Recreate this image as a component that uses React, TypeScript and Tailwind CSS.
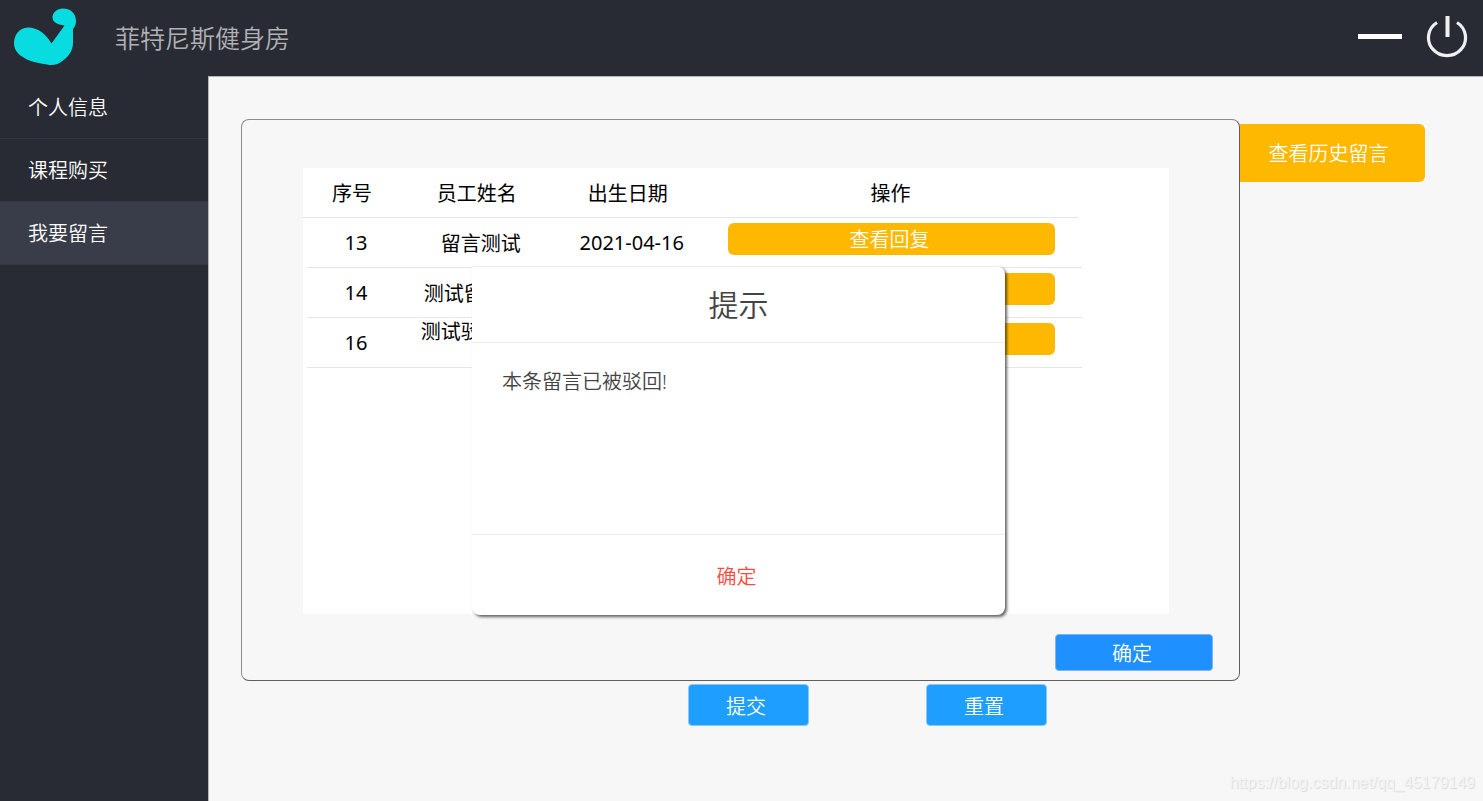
const menu = [
  { label: '个人信息', active: false },
  { label: '课程购买', active: false },
  { label: '我要留言', active: true },
];

const columns = ['序号', '员工姓名', '出生日期', '操作'];

const messages = [
  { id: 13, name: '留言测试', date: '2021-04-16' },
  { id: 14, name: '测试留言002', date: '2021-04-16' },
  { id: 16, name: '测试驳回留言1', date: '2021-04-16' },
];

const rowGrid = 'grid grid-cols-[98fr_152fr_150fr_376fr] border-b border-[#e6e6e6]';

function Logo() {
  return (
    <svg className="h-[60px] w-[66px]" viewBox="0 0 66 60" fill="#08dce0" aria-hidden="true">
      <path d="M39.5 36.5C34 27 26 20.5 16 20.5C7 21 2 28 2 36.5C2 44 8 49 15 52.500C22 55.500 29 56.500 35 57.500C41 59 46 57.500 51 53.500C57 49 61 43.500 61 35.500V22C63 20 64 17 64 14C64 6 58 1.500 51 1.500C45 1.500 40.500 5.500 40.500 10.500C40.500 15 45 17.500 52.500 18.500Z" />
    </svg>
  );
}

function PowerIcon() {
  return (
    <svg className="h-11 w-[42px]" viewBox="0 0 42 44" fill="none" stroke="#f0f0f0" strokeWidth="3.200" aria-hidden="true">
      <path d="M11 7.500A18.500 18 0 1 0 31 7.500" />
      <path d="M21.500 1V22" strokeWidth="4" />
    </svg>
  );
}

function MessageTable() {
  return (
    <table className="block w-[90%] text-xl leading-6 font-normal text-black">
      <thead className="block pr-1">
        <tr className={rowGrid}>
          {columns.map((c) => (
            <th key={c} scope="col" className="flex h-[49px] items-center justify-center pt-0.5 font-normal">
              {c}
            </th>
          ))}
        </tr>
      </thead>
      <tbody className="block pl-1">
        {messages.map((m) => (
          <tr key={m.id} className={rowGrid}>
            <td className="flex h-[49px] items-center justify-center">{m.id}</td>
            <td className="flex h-[49px] items-center justify-center px-3 pt-0.5 text-center">{m.name}</td>
            <td className="flex h-[49px] items-center justify-center">{m.date}</td>
            <td className="h-[49px] pt-[5px] pr-[27px] pl-[21px]">
              <button
                type="button"
                className="h-8 w-full rounded-md bg-[#ffb800] pt-0.5 pr-1 text-xl leading-[30px] font-[350] text-white"
              >
                查看回复
              </button>
            </td>
          </tr>
        ))}
      </tbody>
    </table>
  );
}

function NoticeDialog() {
  return (
    <div className="absolute inset-x-0 top-[146px] flex justify-center pr-1">
      <div
        role="dialog"
        aria-labelledby="notice-title"
        className="w-[533px] rounded-tr-lg rounded-br-lg rounded-bl-lg border-t border-[#f0f0f0] bg-white text-[#444444] shadow-[2px_2px_3px_rgba(0,0,0,0.6)]"
      >
        <h2 id="notice-title" className="border-b border-[#ebebeb] pt-0.5 pb-px text-center text-3xl leading-[72px]">
          提示
        </h2>
        <p className="h-[191px] px-[30px] pt-[25px] text-xl leading-7">本条留言已被驳回!</p>
        <div className="border-t border-[#ebebeb] pt-1">
          <button type="button" className="h-[76px] w-full pr-1 text-xl text-[#ff4b3e]">
            确定
          </button>
        </div>
      </div>
    </div>
  );
}

export default function App() {
  return (
    <div className="flex min-h-screen flex-col bg-[#282b33] font-['Noto_Sans','Noto_Sans_CJK_SC',sans-serif] font-[350]">
      <header className="flex h-[76px] items-center pr-[15px] pb-[3px] pl-3">
        <Logo />
        <h1 className="ml-[37px] pt-0.5 text-[25px] leading-8 font-[350] text-[#b0b1b4]">菲特尼斯健身房</h1>
        <div className="ml-auto flex items-center gap-6">
          <button type="button" aria-label="最小化" className="flex h-11 w-11 items-center">
            <span className="h-[5px] w-full bg-white" />
          </button>
          <button type="button" aria-label="退出">
            <PowerIcon />
          </button>
        </div>
      </header>

      <div className="flex flex-1">
        <nav className="w-52 shrink-0">
          <ul>
            {menu.map((item) => (
              <li key={item.label} className="border-b border-[#343742]">
                <a
                  href="#"
                  aria-current={item.active ? 'page' : undefined}
                  className={
                    item.active
                      ? 'block bg-[#393d49] pt-0.5 pl-7 text-xl leading-[60px] text-white'
                      : 'block pt-0.5 pl-7 text-xl leading-[60px] text-white'
                  }
                >
                  {item.label}
                </a>
              </li>
            ))}
          </ul>
        </nav>

        <main className="relative flex-1 border-t border-l border-[#b5b5b8] bg-[#f7f7f7] pt-[42px] pr-[58px] pl-8">
          <div className="flex items-start">
            <section className="relative flex-1 rounded-lg border border-t-[#8c8c8c] border-r-[#606060] border-b-[#606060] border-l-[#8c8c8c] pt-12 pb-[9px]">
              <div className="mr-[70px] ml-[61px] h-[446px] bg-white">
                <MessageTable />
              </div>
              <div className="mt-5 flex justify-end pr-[26px]">
                <button
                  type="button"
                  className="h-[37px] w-[158px] rounded-sm border border-[#7fb4e6] bg-[#1e90ff] pt-0.5 pr-1 text-xl text-white"
                >
                  确定
                </button>
              </div>
              <NoticeDialog />
            </section>
            <button
              type="button"
              className="mt-[5px] h-[58px] w-[185px] rounded-r-md bg-[#ffb800] pt-0.5 pr-2 text-xl text-white"
            >
              查看历史留言
            </button>
          </div>

          <div className="mt-[3px] flex justify-center gap-[117px] pl-[68px]">
            <button
              type="button"
              className="h-[42px] w-[121px] rounded-sm border border-[#8ac6f8] bg-[#1e9fff] pt-1 pr-1 text-xl text-white"
            >
              提交
            </button>
            <button
              type="button"
              className="h-[42px] w-[121px] rounded-sm border border-[#8ac6f8] bg-[#1e9fff] pt-1 pr-1 text-xl text-white"
            >
              重置
            </button>
          </div>

          <p className="absolute right-2 bottom-1.5 font-['Liberation_Sans',sans-serif] text-base leading-6 font-normal text-[#f4f4f4] [text-shadow:1px_1px_1px_#dadada]">
            https://blog.csdn.net/qq_45179149
          </p>
        </main>
      </div>
    </div>
  );
}
